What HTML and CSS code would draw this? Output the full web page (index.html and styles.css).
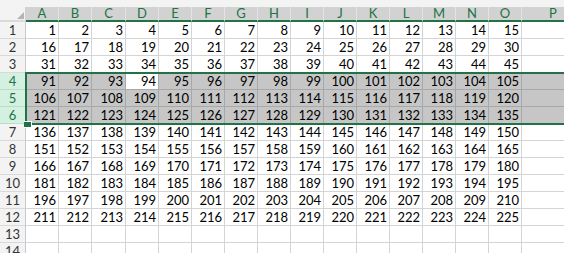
FILE: index.html
```html
<!DOCTYPE html>
<html>
<head>
<meta charset="utf-8">
<link rel="stylesheet" href="styles.css">
</head>
<body>
<div class="sheet">
  <div class="strip"></div>
  <table class="grid">
    <colgroup>
      <col class="w-rh"><col class="w-c"><col class="w-c"><col class="w-c34"><col class="w-c"><col class="w-c"><col class="w-c"><col class="w-c"><col class="w-c"><col class="w-c"><col class="w-c"><col class="w-c"><col class="w-c"><col class="w-c"><col class="w-c"><col class="w-c"><col class="w-p">
    </colgroup>
    <tr class="hdr">
      <th class="corner"><svg class="tri" width="7" height="7" viewBox="0 0 7 7"><polygon points="7,0 7,7 0,7" fill="#b4b4b4"/></svg></th>
      <th class="ch">A</th><th class="ch">B</th><th class="ch">C</th><th class="ch">D</th><th class="ch">E</th><th class="ch">F</th><th class="ch">G</th><th class="ch">H</th><th class="ch">I</th><th class="ch">J</th><th class="ch">K</th><th class="ch">L</th><th class="ch">M</th><th class="ch">N</th><th class="ch">O</th><th class="ch pcol">P</th>
    </tr>
    <tr><th class="rh">1</th><td>1</td><td>2</td><td>3</td><td>4</td><td>5</td><td>6</td><td>7</td><td>8</td><td>9</td><td>10</td><td>11</td><td>12</td><td>13</td><td>14</td><td>15</td><td></td></tr>
    <tr><th class="rh">2</th><td>16</td><td>17</td><td>18</td><td>19</td><td>20</td><td>21</td><td>22</td><td>23</td><td>24</td><td>25</td><td>26</td><td>27</td><td>28</td><td>29</td><td>30</td><td></td></tr>
    <tr><th class="rh">3</th><td>31</td><td>32</td><td>33</td><td>34</td><td>35</td><td>36</td><td>37</td><td>38</td><td>39</td><td>40</td><td>41</td><td>42</td><td>43</td><td>44</td><td>45</td><td></td></tr>
    <tr class="sel"><th class="rh">4</th><td>91</td><td>92</td><td>93</td><td class="act">94</td><td>95</td><td>96</td><td>97</td><td>98</td><td>99</td><td>100</td><td>101</td><td>102</td><td>103</td><td>104</td><td>105</td><td></td></tr>
    <tr class="sel"><th class="rh">5</th><td>106</td><td>107</td><td>108</td><td>109</td><td>110</td><td>111</td><td>112</td><td>113</td><td>114</td><td>115</td><td>116</td><td>117</td><td>118</td><td>119</td><td>120</td><td></td></tr>
    <tr class="sel"><th class="rh">6</th><td>121</td><td>122</td><td>123</td><td>124</td><td>125</td><td>126</td><td>127</td><td>128</td><td>129</td><td>130</td><td>131</td><td>132</td><td>133</td><td>134</td><td>135</td><td></td></tr>
    <tr><th class="rh">7</th><td>136</td><td>137</td><td>138</td><td>139</td><td>140</td><td>141</td><td>142</td><td>143</td><td>144</td><td>145</td><td>146</td><td>147</td><td>148</td><td>149</td><td>150</td><td></td></tr>
    <tr><th class="rh">8</th><td>151</td><td>152</td><td>153</td><td>154</td><td>155</td><td>156</td><td>157</td><td>158</td><td>159</td><td>160</td><td>161</td><td>162</td><td>163</td><td>164</td><td>165</td><td></td></tr>
    <tr><th class="rh">9</th><td>166</td><td>167</td><td>168</td><td>169</td><td>170</td><td>171</td><td>172</td><td>173</td><td>174</td><td>175</td><td>176</td><td>177</td><td>178</td><td>179</td><td>180</td><td></td></tr>
    <tr><th class="rh">10</th><td>181</td><td>182</td><td>183</td><td>184</td><td>185</td><td>186</td><td>187</td><td>188</td><td>189</td><td>190</td><td>191</td><td>192</td><td>193</td><td>194</td><td>195</td><td></td></tr>
    <tr><th class="rh">11</th><td>196</td><td>197</td><td>198</td><td>199</td><td>200</td><td>201</td><td>202</td><td>203</td><td>204</td><td>205</td><td>206</td><td>207</td><td>208</td><td>209</td><td>210</td><td></td></tr>
    <tr><th class="rh">12</th><td>211</td><td>212</td><td>213</td><td>214</td><td>215</td><td>216</td><td>217</td><td>218</td><td>219</td><td>220</td><td>221</td><td>222</td><td>223</td><td>224</td><td>225</td><td></td></tr>
    <tr><th class="rh">13</th><td></td><td></td><td></td><td></td><td></td><td></td><td></td><td></td><td></td><td></td><td></td><td></td><td></td><td></td><td></td><td></td></tr>
    <tr><th class="rh">14</th><td></td><td></td><td></td><td></td><td></td><td></td><td></td><td></td><td></td><td></td><td></td><td></td><td></td><td></td><td></td><td></td></tr>
  </table>
  <div class="selection"></div>
  <div class="handle"></div>
</div>
</body>
</html>
```
FILE: styles.css
```css
* { box-sizing: border-box; }
html, body { margin: 0; padding: 0; background: #fff; }
body {
  width: 564px;
  height: 253px;
  overflow: hidden;
  font-family: Lato, "Liberation Sans", sans-serif;
  font-size: 13px;
  color: #000;
}
.sheet { position: relative; width: 564px; overflow: hidden; }
.strip { height: 7px; background: #f3f3f3; }

.grid {
  border-collapse: separate;
  border-spacing: 0;
  table-layout: fixed;
  width: 564px;
}
.w-rh { width: 26px; }
.w-c { width: 33px; }
.w-c34 { width: 34px; }
.w-p { width: 42px; }

.grid tr { height: 17px; }
.grid td, .grid th {
  padding: 0;
  height: 17px;
  line-height: 16px;
  font-weight: normal;
  white-space: nowrap;
  border-right: 1px solid #d4d4d4;
  border-bottom: 1px solid #d4d4d4;
}
.grid td { text-align: right; padding-right: 2px; }

.grid tr.hdr { height: 15px; }
.grid .hdr th {
  height: 15px;
  line-height: 13px;
  overflow: visible;
}
.grid th.corner {
  background: #f3f3f3;
  border-right: 1px solid #d0d0d0;
  border-bottom: 2px solid #dadada;
  text-align: right;
  vertical-align: bottom;
  padding: 0 1px 1px 0;
}
.tri { display: block; margin-left: auto; }
.grid th.ch {
  background: #d2d2d2;
  color: #217346;
  text-align: center;
  border-right: 1px solid #e3e3e3;
  border-bottom: 2px solid #217346;
}
.grid th.pcol { padding-left: 20px; border-right: none; }

.grid th.rh {
  background: #f3f3f3;
  color: #333;
  text-align: center;
  border-right: 1px solid #c8c8c8;
  border-bottom: 1px solid #d9d9d9;
}
.grid tr.sel th.rh {
  background: #d3f0e0;
  color: #217346;
  border-bottom-color: #b9dfc9;
}
.grid tr.sel td {
  background: #c6c6c6;
  border-right-color: #a8a8a8;
  border-bottom-color: #a8a8a8;
}
.grid tr.sel td:last-child { border-right: none; }
.grid tr.sel td.act { background: #fff; }
.grid td:last-child { border-right: none; }

.selection {
  position: absolute;
  left: 25px;
  top: 72px;
  right: 0;
  height: 53px;
  border: 2px solid #217346;
  border-right: none;
  pointer-events: none;
}
.handle {
  position: absolute;
  left: 24px;
  top: 121px;
  width: 8px;
  height: 7px;
  background: #217346;
  border: 1px solid #fff;
  border-left: none;
}
```
